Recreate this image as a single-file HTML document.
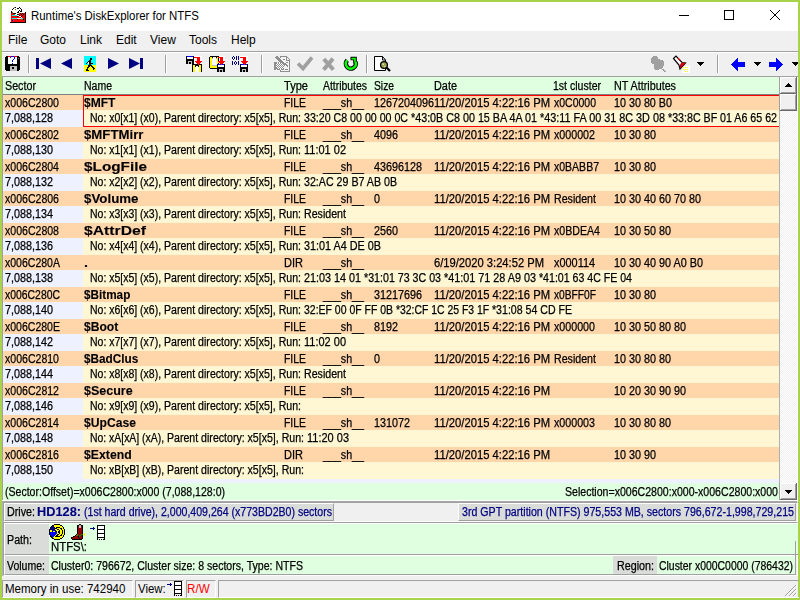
<!DOCTYPE html>
<html><head><meta charset="utf-8"><title>Runtime's DiskExplorer for NTFS</title>
<style>
html,body{margin:0;padding:0;}
body{width:800px;height:600px;overflow:hidden;background:#a8d34a;position:relative;font-family:"Liberation Sans",sans-serif;font-size:12px;color:#000;}
div,span,svg{position:absolute;}
#win{left:2px;top:2px;width:796px;height:596px;background:#f0f0f0;}
#title{left:2px;top:2px;width:796px;height:29px;background:#fff;}
.ui{font-size:12px;line-height:16px;white-space:pre;transform-origin:0 0;}
#tbtop{left:2px;top:51px;width:796px;height:1px;background:#a0a0a0;border-bottom:1px solid #fff;}
.sep{width:1px;height:18px;top:55px;background:#a0a0a0;border-right:1px solid #fff;}
#lframe{left:2px;top:76px;width:796px;height:424px;background:#fff;border-left:1px solid #a0a0a0;border-top:1px solid #a0a0a0;box-sizing:border-box;}
#hdr{left:3px;top:77px;width:776px;height:17px;background:#e0ffe0;border-bottom:1px solid #808080;}
#list{left:3px;top:95px;width:776px;height:388px;background:#eef1ff;}
.r{left:3px;width:776px;}
.r.o{background:#ffd5aa;height:15px;}
.r.c{background:linear-gradient(to right,#eef1ff 0,#eef1ff 80px,#fff7d3 80px);height:17px;}
.t{-webkit-text-stroke:0.25px;line-height:14px;margin-top:2px;margin-left:0.25px;white-space:pre;transform-origin:0 0;font-size:12px;}
.b{font-weight:bold;-webkit-text-stroke:0.1px;}
#selbox{left:83px;top:95px;width:700px;height:32px;border:1px solid #f00;box-sizing:border-box;}
#stl{left:3px;top:483px;width:776px;height:17px;background:#e0ffe0;}
#sb{left:779px;top:77px;width:18px;height:423px;background:repeating-conic-gradient(#fff 0 25%,#f0f0f0 0 50%) 0 0/2px 2px;border-left:1px solid #b0b0b0;box-sizing:border-box;}
.btn{background:#f0f0f0;box-shadow:inset 1px 0 0 #a0a0a0,inset -1px -1px 0 #696969,inset 2px 1px 0 #fff,inset -2px -2px 0 #a0a0a0;}
.sunk{box-sizing:border-box;border:1px solid;border-color:#a0a0a0 #fff #fff #a0a0a0;}
.rais{box-sizing:border-box;border:1px solid;border-color:#fff #a0a0a0 #a0a0a0 #fff;}
.g{background:#d9dcd9;}
.gr{background:#e0ffe0;}
.nv{color:#000080;}
</style></head><body>
<div id="win"></div>
<div id="title"></div>
<span class="ui" style="left:31px;top:8px;transform:scaleX(0.952)">Runtime's DiskExplorer for NTFS</span>
<!-- window controls -->
<svg style="left:670px;top:2px" width="128" height="29" viewBox="0 0 128 29" shape-rendering="crispEdges"><path d="M9 13.5h10" stroke="#000" fill="none"/><rect x="54.5" y="8.5" width="9" height="9" stroke="#000" fill="none"/><path d="M100 8l10 10M110 8l-10 10" stroke="#000" fill="none" shape-rendering="auto"/></svg>
<!-- menu -->
<span class="ui m" style="left:8px;top:32px">File</span><span class="ui m" style="left:40px;top:32px">Goto</span><span class="ui m" style="left:80px;top:32px">Link</span><span class="ui m" style="left:116px;top:32px">Edit</span><span class="ui m" style="left:150px;top:32px">View</span><span class="ui m" style="left:189px;top:32px">Tools</span><span class="ui m" style="left:231px;top:32px">Help</span>
<div id="tbtop"></div>
<div class="sep" style="left:28px"></div><div class="sep" style="left:165px"></div><div class="sep" style="left:261px"></div><div class="sep" style="left:366px"></div><div class="sep" style="left:717px"></div>
<div id="lframe"></div>
<div id="list"></div>
<div class="r o" style="top:95px"></div><div class="r c" style="top:110px"></div>
<div class="r o" style="top:127px"></div><div class="r c" style="top:142px"></div>
<div class="r o" style="top:159px"></div><div class="r c" style="top:174px"></div>
<div class="r o" style="top:191px"></div><div class="r c" style="top:206px"></div>
<div class="r o" style="top:223px"></div><div class="r c" style="top:238px"></div>
<div class="r o" style="top:255px"></div><div class="r c" style="top:270px"></div>
<div class="r o" style="top:287px"></div><div class="r c" style="top:302px"></div>
<div class="r o" style="top:319px"></div><div class="r c" style="top:334px"></div>
<div class="r o" style="top:351px"></div><div class="r c" style="top:366px"></div>
<div class="r o" style="top:383px"></div><div class="r c" style="top:398px"></div>
<div class="r o" style="top:415px"></div><div class="r c" style="top:430px"></div>
<div class="r o" style="top:447px"></div><div class="r c" style="top:462px"></div>
<div id="hdr"></div>
<div id="stl"></div>
<div id="selbox"></div>
<div id="sb"></div>
<div class="btn" style="left:779px;top:77px;width:18px;height:17px"></div>
<div class="btn" style="left:779px;top:94px;width:18px;height:17px"></div>
<div class="btn" style="left:779px;top:483px;width:18px;height:17px"></div>
<svg style="left:785px;top:83px" width="7" height="4" shape-rendering="crispEdges"><path d="M3 0h1v1h1v1h1v1h1v1h-7v-1h1v-1h1v-1h1z" fill="#000"/></svg>
<svg style="left:785px;top:490px" width="7" height="4" shape-rendering="crispEdges"><path d="M0 0h7v1h-1v1h-1v1h-1v1h-1v-1h-1v-1h-1v-1h-1z" fill="#000"/></svg>
<!-- lines under list -->
<div style="left:2px;top:500px;width:796px;height:1px;background:#fff"></div>
<div style="left:2px;top:501px;width:795px;height:1px;background:#a8a8a8"></div>
<div style="left:2px;top:502px;width:1px;height:74px;background:#b0b0bc"></div>
<!-- Drive container -->
<div class="sunk" style="left:3px;top:502px;width:795px;height:20px;background:#f0f0f0"></div>
<div class="rais g" style="left:4px;top:503px;width:330px;height:18px"></div>
<div class="rais g" style="left:458px;top:503px;width:338px;height:18px"></div>
<!-- Path / Volume container -->
<div class="sunk" style="left:3px;top:522px;width:795px;height:54px;background:#f0f0f0"></div>
<div class="rais gr" style="left:4px;top:523px;width:794px;height:32px;border-right:0"></div>
<div class="g" style="left:5px;top:524px;width:44px;height:30px"></div>
<div class="rais gr" style="left:4px;top:555px;width:792px;height:20px"></div>
<div class="g" style="left:5px;top:556px;width:44px;height:18px"></div>
<div class="g" style="left:613px;top:556px;width:44px;height:18px"></div>
<div style="left:795px;top:541px;width:1px;height:33px;background:#a0a0a0"></div>
<!-- status bar -->
<div class="sunk" style="left:2px;top:580px;width:131px;height:18px"></div>
<div class="sunk" style="left:135px;top:580px;width:49px;height:18px"></div>
<div class="sunk" style="left:186px;top:580px;width:30px;height:18px"></div>
<div class="sunk" style="left:218px;top:580px;width:581px;height:18px;border-right:0"></div>
<span class="ui" style="left:5px;top:581px;transform:scaleX(0.96)">Memory in use: 742940</span>
<span class="ui" style="left:138px;top:581px;transform:scaleX(0.95)">View:</span>
<span class="ui" style="left:187px;top:581px;color:#f00;transform:scaleX(0.97)">R/W</span>
<svg style="left:10px;top:7px" width="16" height="16" viewBox="0 0 16 16" shape-rendering="crispEdges"><path fill="#807000" d="M4 0h1v1h-1zM5 2h1v1h-1zM2 5h1v1h-1zM4 7h1v1h-1zM11 12h2v1h-2z"/><path fill="#000" d="M5 0h1v1h-1zM9 0h1v1h-1zM3 1h1v1h-1zM7 1h2v1h-2zM10 1h1v1h-1zM2 2h1v1h-1zM11 2h1v1h-1zM9 3h1v1h-1zM11 3h1v1h-1zM1 4h1v1h-1zM8 4h1v1h-1zM10 4h2v1h-2zM1 5h1v1h-1zM7 5h2v1h-2zM15 5h1v1h-1zM3 6h3v1h-3zM10 6h1v1h-1zM12 6h1v1h-1zM15 6h1v1h-1zM7 7h2v1h-2zM11 7h1v1h-1zM13 7h1v1h-1zM15 7h1v1h-1zM9 8h1v1h-1zM12 8h1v1h-1zM15 8h1v1h-1zM7 9h1v1h-1zM11 9h1v1h-1zM15 9h1v1h-1zM15 10h1v1h-1zM15 11h1v1h-1zM7 12h1v1h-1zM13 12h1v1h-1zM15 12h1v1h-1zM2 13h1v1h-1zM15 13h1v1h-1zM15 14h1v1h-1zM0 15h16v1h-16z"/><path fill="#fff" d="M4 1h3v1h-3zM9 1h1v1h-1zM3 2h2v1h-2zM6 2h5v1h-5zM3 3h6v1h-6zM10 3h1v1h-1zM3 4h5v1h-5zM9 4h1v1h-1zM3 5h4v1h-4zM9 5h1v1h-1zM6 6h3v1h-3zM5 7h2v1h-2zM7 8h2v1h-2zM9 9h2v1h-2zM11 10h1v1h-1zM7 11h4v1h-4z"/><path fill="#f00" d="M1 6h2v1h-2zM9 6h1v1h-1zM11 6h1v1h-1zM13 6h2v1h-2zM1 7h3v1h-3zM9 7h2v1h-2zM12 7h1v1h-1zM14 7h1v1h-1zM1 8h1v1h-1zM10 8h2v1h-2zM13 8h2v1h-2zM1 9h6v1h-6zM8 9h1v1h-1zM12 9h3v1h-3zM1 10h10v1h-10zM12 10h3v1h-3zM1 11h1v1h-1zM13 11h2v1h-2zM1 12h6v1h-6zM8 12h3v1h-3zM14 12h1v1h-1zM1 13h1v1h-1zM4 13h11v1h-11zM1 14h14v1h-14z"/><path fill="#0ff" d="M2 8h5v1h-5zM2 11h5v1h-5zM11 11h2v1h-2z"/><path fill="#f0f" d="M3 13h1v1h-1z"/></svg>
<svg style="left:5px;top:56px" width="15" height="15" viewBox="0 0 15 15" shape-rendering="crispEdges"><path fill="#000" d="M1 0h2v1h-2zM12 0h2v1h-2zM0 1h3v1h-3zM12 1h3v1h-3zM0 2h3v1h-3zM12 2h1v1h-1zM14 2h1v1h-1zM0 3h3v1h-3zM12 3h3v1h-3zM0 4h3v1h-3zM12 4h3v1h-3zM0 5h3v1h-3zM12 5h3v1h-3zM0 6h3v1h-3zM12 6h3v1h-3zM0 7h3v1h-3zM12 7h3v1h-3zM0 8h15v1h-15zM0 9h15v1h-15zM0 10h5v1h-5zM12 10h3v1h-3zM0 11h5v1h-5zM7 11h2v1h-2zM12 11h3v1h-3zM0 12h5v1h-5zM7 12h2v1h-2zM12 12h3v1h-3zM0 13h5v1h-5zM12 13h3v1h-3zM1 14h4v1h-4zM12 14h2v1h-2z"/><path fill="#f00" d="M3 0h3v1h-3zM9 0h3v1h-3z"/><path fill="#00f" d="M6 0h3v1h-3zM5 1h1v1h-1zM9 1h1v1h-1zM9 2h1v1h-1zM8 3h1v1h-1zM7 4h1v1h-1zM7 5h1v1h-1zM7 7h1v1h-1z"/><path fill="#fff" d="M3 1h2v1h-2zM6 1h3v1h-3zM10 1h2v1h-2zM3 2h6v1h-6zM10 2h2v1h-2zM3 3h5v1h-5zM9 3h3v1h-3zM3 4h4v1h-4zM8 4h4v1h-4zM3 5h4v1h-4zM8 5h4v1h-4zM3 6h9v1h-9zM3 7h4v1h-4zM8 7h4v1h-4z"/><path fill="#808080" d="M13 2h1v1h-1z"/><path fill="#c0c0c0" d="M5 10h7v1h-7zM5 11h2v1h-2zM9 11h3v1h-3zM5 12h2v1h-2zM9 12h3v1h-3zM5 13h7v1h-7zM5 14h7v1h-7z"/></svg>
<svg style="left:36px;top:58px" width="108" height="11" viewBox="0 0 108 11"><g fill="#000080"><rect x="0" y="0" width="3" height="11"/><path d="M15 0L15 11L4 5.5z"/><path d="M36 0L36 11L25 5.5z"/><path d="M72 0L72 11L83 5.5z"/><path d="M93 0L93 11L104 5.5z"/><rect x="104" y="0" width="3" height="11"/></g></svg>
<svg style="left:84px;top:56px" width="12" height="16" viewBox="0 0 12 16" shape-rendering="crispEdges"><path fill="#0ff" d="M0 0h12v1h-12zM0 1h12v1h-12zM0 2h6v1h-6zM8 2h4v1h-4zM0 3h6v1h-6zM8 3h4v1h-4zM0 4h5v1h-5zM7 4h5v1h-5zM0 5h4v1h-4zM7 5h5v1h-5zM0 6h3v1h-3zM7 6h5v1h-5zM0 7h2v1h-2zM3 7h1v1h-1zM9 7h3v1h-3zM0 8h5v1h-5zM7 8h5v1h-5z"/><path fill="#000" d="M6 2h2v1h-2zM6 3h2v1h-2zM5 4h2v1h-2zM4 5h3v1h-3zM3 6h1v1h-1zM5 6h2v1h-2zM2 7h1v1h-1zM5 7h4v1h-4zM5 8h2v1h-2zM4 9h4v1h-4zM4 10h2v1h-2zM7 10h2v1h-2zM3 11h2v1h-2zM8 11h2v1h-2zM3 12h1v1h-1zM9 12h2v1h-2zM2 13h2v1h-2zM9 13h1v1h-1zM2 14h3v1h-3z"/><path fill="#fff" d="M4 6h1v1h-1zM4 7h1v1h-1z"/><path fill="#ff0" d="M0 9h4v1h-4zM8 9h4v1h-4zM0 10h4v1h-4zM6 10h1v1h-1zM9 10h3v1h-3zM0 11h3v1h-3zM5 11h3v1h-3zM10 11h2v1h-2zM0 12h3v1h-3zM4 12h5v1h-5zM11 12h1v1h-1zM0 13h2v1h-2zM4 13h5v1h-5zM10 13h2v1h-2zM0 14h2v1h-2zM5 14h7v1h-7zM0 15h12v1h-12z"/></svg>
<svg style="left:186px;top:56px" width="16" height="16" viewBox="0 0 16 16" shape-rendering="crispEdges"><path fill="#000" d="M0 0h1v1h-1zM7 0h1v1h-1zM0 1h1v1h-1zM7 1h1v1h-1zM0 2h1v1h-1zM7 2h1v1h-1zM0 3h8v1h-8zM0 4h8v1h-8zM0 5h2v1h-2zM6 5h2v1h-2zM0 6h2v1h-2zM3 6h2v1h-2zM6 6h2v1h-2zM0 7h2v1h-2zM3 7h2v1h-2zM6 7h2v1h-2zM6 8h6v1h-6zM13 8h3v1h-3zM6 9h1v1h-1zM9 9h4v1h-4zM15 9h1v1h-1zM6 10h1v1h-1zM9 10h1v1h-1zM12 10h1v1h-1zM15 10h1v1h-1zM6 11h1v1h-1zM15 11h1v1h-1zM6 12h1v1h-1zM15 12h1v1h-1zM6 13h1v1h-1zM15 13h1v1h-1zM6 14h1v1h-1zM15 14h1v1h-1zM6 15h1v1h-1zM15 15h1v1h-1z"/><path fill="#00f" d="M1 0h6v1h-6z"/><path fill="#fff" d="M8 0h8v1h-8zM1 1h6v1h-6zM14 1h2v1h-2zM1 2h6v1h-6zM8 2h3v1h-3zM14 2h2v1h-2zM8 3h3v1h-3zM14 3h2v1h-2zM8 4h3v1h-3zM14 4h2v1h-2zM8 5h1v1h-1zM8 6h2v1h-2zM15 6h1v1h-1zM8 7h3v1h-3zM14 7h2v1h-2zM10 10h2v1h-2zM9 11h4v1h-4zM9 12h4v1h-4zM9 13h4v1h-4zM9 14h4v1h-4zM9 15h4v1h-4z"/><path fill="#f00" d="M8 1h6v1h-6zM11 2h3v1h-3zM11 3h3v1h-3zM11 4h3v1h-3zM9 5h7v1h-7zM10 6h5v1h-5zM11 7h3v1h-3zM12 8h1v1h-1z"/><path fill="#c0c0c0" d="M2 5h4v1h-4zM2 6h1v1h-1zM5 6h1v1h-1zM2 7h1v1h-1zM5 7h1v1h-1z"/><path fill="#ff0" d="M7 9h2v1h-2zM13 9h2v1h-2zM7 10h2v1h-2zM13 10h2v1h-2zM7 11h2v1h-2zM13 11h2v1h-2zM7 12h2v1h-2zM13 12h2v1h-2zM7 13h2v1h-2zM13 13h2v1h-2zM7 14h2v1h-2zM13 14h2v1h-2zM7 15h2v1h-2zM13 15h2v1h-2z"/></svg>
<svg style="left:209px;top:56px" width="16" height="16" viewBox="0 0 16 16" shape-rendering="crispEdges"><path fill="#000" d="M1 0h9v1h-9zM0 1h1v1h-1zM3 1h1v1h-1zM7 1h1v1h-1zM0 2h1v1h-1zM9 2h1v1h-1zM0 3h1v1h-1zM9 3h1v1h-1zM0 4h1v1h-1zM9 4h1v1h-1zM0 5h1v1h-1zM0 6h1v1h-1zM0 7h1v1h-1zM9 7h1v1h-1zM0 8h1v1h-1zM8 8h1v1h-1zM15 8h1v1h-1zM0 9h1v1h-1zM8 9h1v1h-1zM15 9h1v1h-1zM0 10h1v1h-1zM8 10h1v1h-1zM15 10h1v1h-1zM0 11h1v1h-1zM8 11h8v1h-8zM1 12h15v1h-15zM8 13h2v1h-2zM14 13h2v1h-2zM8 14h2v1h-2zM11 14h2v1h-2zM14 14h2v1h-2zM8 15h2v1h-2zM11 15h2v1h-2zM14 15h2v1h-2z"/><path fill="#fff" d="M10 0h6v1h-6zM4 1h3v1h-3zM14 1h2v1h-2zM4 2h3v1h-3zM10 2h1v1h-1zM14 2h2v1h-2zM3 3h5v1h-5zM10 3h1v1h-1zM14 3h2v1h-2zM3 4h5v1h-5zM10 4h1v1h-1zM14 4h2v1h-2zM3 5h5v1h-5zM3 6h5v1h-5zM15 6h1v1h-1zM3 7h5v1h-5zM10 7h1v1h-1zM14 7h2v1h-2zM3 8h5v1h-5zM9 9h6v1h-6zM9 10h6v1h-6z"/><path fill="#ff0" d="M1 1h2v1h-2zM8 1h1v1h-1zM1 2h2v1h-2zM8 2h1v1h-1zM1 3h2v1h-2zM8 3h1v1h-1zM1 4h2v1h-2zM8 4h1v1h-1zM1 5h2v1h-2zM8 5h1v1h-1zM1 6h2v1h-2zM8 6h2v1h-2zM1 7h2v1h-2zM8 7h1v1h-1zM1 8h2v1h-2zM1 9h2v1h-2zM1 10h7v1h-7zM1 11h7v1h-7z"/><path fill="#f00" d="M9 1h5v1h-5zM11 2h3v1h-3zM11 3h3v1h-3zM11 4h3v1h-3zM9 5h7v1h-7zM10 6h5v1h-5zM11 7h3v1h-3zM12 8h1v1h-1z"/><path fill="#c0c0c0" d="M3 2h1v1h-1zM7 2h1v1h-1zM3 9h5v1h-5zM10 13h4v1h-4zM10 14h1v1h-1zM13 14h1v1h-1zM10 15h1v1h-1zM13 15h1v1h-1z"/><path fill="#00f" d="M9 8h3v1h-3zM13 8h2v1h-2z"/></svg>
<svg style="left:232px;top:56px" width="16" height="16" viewBox="0 0 16 16" shape-rendering="crispEdges"><path fill="#000080" d="M1 0h1v1h-1zM4 0h1v1h-1zM6 0h1v1h-1zM0 1h1v1h-1zM2 1h1v1h-1zM4 1h1v1h-1zM6 1h1v1h-1zM0 2h1v1h-1zM2 2h1v1h-1zM4 2h1v1h-1zM6 2h1v1h-1zM1 3h1v1h-1zM4 3h1v1h-1zM6 3h1v1h-1zM0 5h1v1h-1zM3 5h1v1h-1zM6 5h1v1h-1zM0 6h1v1h-1zM2 6h1v1h-1zM4 6h1v1h-1zM6 6h1v1h-1zM0 7h1v1h-1zM2 7h1v1h-1zM4 7h1v1h-1zM6 7h1v1h-1zM0 8h1v1h-1zM3 8h1v1h-1zM6 8h1v1h-1z"/><path fill="#fff" d="M8 0h8v1h-8zM14 1h2v1h-2zM8 2h3v1h-3zM14 2h2v1h-2zM8 3h3v1h-3zM14 3h2v1h-2zM8 4h3v1h-3zM14 4h2v1h-2zM8 5h1v1h-1zM8 6h2v1h-2zM15 6h1v1h-1zM8 7h3v1h-3zM14 7h2v1h-2zM9 9h6v1h-6zM9 10h6v1h-6z"/><path fill="#f00" d="M8 1h6v1h-6zM11 2h3v1h-3zM11 3h3v1h-3zM11 4h3v1h-3zM9 5h7v1h-7zM10 6h5v1h-5zM11 7h3v1h-3zM12 8h1v1h-1z"/><path fill="#000" d="M8 8h1v1h-1zM15 8h1v1h-1zM8 9h1v1h-1zM15 9h1v1h-1zM8 10h1v1h-1zM15 10h1v1h-1zM8 11h8v1h-8zM8 12h8v1h-8zM8 13h2v1h-2zM14 13h2v1h-2zM8 14h2v1h-2zM11 14h2v1h-2zM14 14h2v1h-2zM8 15h2v1h-2zM11 15h2v1h-2zM14 15h2v1h-2z"/><path fill="#00f" d="M9 8h3v1h-3zM13 8h2v1h-2z"/><path fill="#c0c0c0" d="M10 13h4v1h-4zM10 14h1v1h-1zM13 14h1v1h-1zM10 15h1v1h-1zM13 15h1v1h-1z"/></svg>
<svg style="left:274px;top:56px" width="16" height="16" viewBox="0 0 16 16" shape-rendering="crispEdges"><path fill="#8e8e8e" d="M2 0h2v1h-2zM6 0h7v1h-7zM1 1h4v1h-4zM6 1h1v1h-1zM12 1h2v1h-2zM2 2h4v1h-4zM12 2h1v1h-1zM14 2h1v1h-1zM3 3h4v1h-4zM9 3h2v1h-2zM12 3h1v1h-1zM15 3h1v1h-1zM4 4h4v1h-4zM12 4h4v1h-4zM5 5h4v1h-4zM15 5h1v1h-1zM0 6h3v1h-3zM4 6h1v1h-1zM6 6h4v1h-4zM12 6h2v1h-2zM15 6h1v1h-1zM0 7h3v1h-3zM4 7h1v1h-1zM6 7h1v1h-1zM8 7h4v1h-4zM15 7h1v1h-1zM0 8h2v1h-2zM3 8h1v1h-1zM5 8h1v1h-1zM7 8h1v1h-1zM9 8h4v1h-4zM15 8h1v1h-1zM0 9h3v1h-3zM4 9h1v1h-1zM6 9h1v1h-1zM8 9h1v1h-1zM10 9h1v1h-1zM12 9h2v1h-2zM15 9h1v1h-1zM0 10h2v1h-2zM3 10h1v1h-1zM5 10h1v1h-1zM7 10h1v1h-1zM9 10h1v1h-1zM13 10h1v1h-1zM15 10h1v1h-1zM0 11h3v1h-3zM4 11h1v1h-1zM6 11h1v1h-1zM8 11h1v1h-1zM15 11h1v1h-1zM0 12h4v1h-4zM5 12h1v1h-1zM7 12h1v1h-1zM9 12h1v1h-1zM15 12h1v1h-1zM0 13h2v1h-2zM3 13h3v1h-3zM7 13h3v1h-3zM11 13h3v1h-3zM15 13h1v1h-1zM6 14h1v1h-1zM15 14h1v1h-1zM6 15h10v1h-10z"/><path fill="#f4f4f4" d="M7 1h5v1h-5zM6 2h6v1h-6zM13 2h1v1h-1zM7 3h2v1h-2zM11 3h1v1h-1zM13 3h2v1h-2zM8 4h4v1h-4zM9 5h6v1h-6zM10 6h2v1h-2zM14 6h1v1h-1zM12 7h3v1h-3zM13 8h2v1h-2zM11 9h1v1h-1zM14 9h1v1h-1zM10 10h3v1h-3zM14 10h1v1h-1zM10 11h5v1h-5zM10 12h5v1h-5zM10 13h1v1h-1zM14 13h1v1h-1zM7 14h8v1h-8z"/><path fill="#fff" d="M5 6h1v1h-1zM3 7h1v1h-1zM5 7h1v1h-1zM7 7h1v1h-1zM2 8h1v1h-1zM4 8h1v1h-1zM6 8h1v1h-1zM8 8h1v1h-1zM3 9h1v1h-1zM5 9h1v1h-1zM7 9h1v1h-1zM9 9h1v1h-1zM2 10h1v1h-1zM4 10h1v1h-1zM6 10h1v1h-1zM8 10h1v1h-1zM3 11h1v1h-1zM5 11h1v1h-1zM7 11h1v1h-1zM9 11h1v1h-1zM4 12h1v1h-1zM6 12h1v1h-1zM8 12h1v1h-1zM6 13h1v1h-1z"/></svg>
<svg style="left:296px;top:56px" width="18" height="16" viewBox="0 0 18 16"><path d="M2 7.5l5 5L16 1.5" fill="none" stroke="#a0a0a0" stroke-width="3.6"/></svg>
<svg style="left:321px;top:56px" width="15" height="16" viewBox="0 0 15 16"><path d="M2.8 3l9.6 10.6M12 2.6L2.6 13.8" fill="none" stroke="#a0a0a0" stroke-width="4"/></svg>
<svg style="left:343px;top:56px" width="16" height="16" viewBox="0 0 16 16"><path d="M4.2 4.2A5 5 0 1 0 12.6 6" fill="none" stroke="#000" stroke-width="4.4"/><path d="M7.5 .8h6.3v6.4h-3.6v-3h-2.7z" fill="#000"/><path d="M4.2 4.2A5 5 0 1 0 12.6 6" fill="none" stroke="#0f0" stroke-width="2.4"/><path d="M8.5 1.8h4.3v4.6h-1.6v-3h-2.7z" fill="#0f0"/></svg>
<svg style="left:374px;top:56px" width="18" height="16" viewBox="0 0 18 16"><path d="M.5 .5h8l3 3.5v10.5h-11z" fill="#fff" stroke="#000"/><path d="M8.5 .5v3.5h3" fill="none" stroke="#000"/><circle cx="10" cy="9" r="3.4" fill="#a0a050" stroke="#000" stroke-width="1.3"/><path d="M8.6 7.6l1 1M10.6 10.4l.6 .6" stroke="#fff" stroke-width="1.2"/><path d="M12.5 11.5l3.5 3.5" stroke="#000" stroke-width="2.2"/></svg>
<svg style="left:651px;top:56px" width="16" height="16" viewBox="0 0 16 16" shape-rendering="crispEdges"><path fill="#a0a0a0" d="M2 0h4v1h-4zM1 1h6v1h-6zM0 2h7v1h-7zM0 3h9v1h-9zM0 4h12v1h-12zM0 5h13v1h-13zM0 6h13v1h-13zM1 7h12v1h-12zM3 8h10v1h-10zM3 9h10v1h-10zM3 10h9v1h-9zM3 11h9v1h-9zM3 12h8v1h-8zM4 13h4v1h-4zM11 13h2v1h-2zM12 14h2v1h-2zM13 15h2v1h-2z"/></svg>
<svg style="left:672px;top:55px" width="18" height="18" viewBox="0 0 18 18"><rect x="10" y="11" width="8" height="7" fill="#fff"/><path d="M11.5 12.5h0M13.5 12.5h0M15.5 12.5h0M11.5 14.5h0M13.5 14.5h0M15.5 14.5h0M13.5 16.5h0M15.5 16.5h0" stroke="#ff0" stroke-width="1.2" stroke-linecap="square"/><path d="M1.5 3.5l2.5-2.5 6 6.5 3.5 .5-5.5 6-1-4z" fill="#fff" stroke="#000" stroke-width="1.2"/><path d="M9.5 7.5l4 .5-5.2 5.6-.6-3z" fill="#d00"/><path d="M7.6 10.6l1.4-1.2 .3 3z" fill="#800040"/><path d="M6 3l2 2.5" stroke="#f00" stroke-width="1.2"/></svg>
<svg style="left:697px;top:62px" width="7" height="4" viewBox="0 0 7 4" shape-rendering="crispEdges"><path fill="#000" d="M0 0h7v1h-7zM1 1h5v1h-5zM2 2h3v1h-3zM3 3h1v1h-1z"/></svg>
<svg style="left:754px;top:62px" width="7" height="4" viewBox="0 0 7 4" shape-rendering="crispEdges"><path fill="#000" d="M0 0h7v1h-7zM1 1h5v1h-5zM2 2h3v1h-3zM3 3h1v1h-1z"/></svg>
<svg style="left:792px;top:62px" width="6" height="4" viewBox="0 0 6 4" shape-rendering="crispEdges"><path fill="#000" d="M0 0h6v1h-6zM1 1h5v1h-5zM2 2h3v1h-3zM3 3h1v1h-1z"/></svg>
<svg style="left:731px;top:58px" width="14" height="13" viewBox="0 0 14 13" shape-rendering="crispEdges"><path d="M0 6.5L7 0v4h7v5h-7v4z" fill="#00f"/></svg>
<svg style="left:769px;top:58px" width="14" height="13" viewBox="0 0 14 13" shape-rendering="crispEdges"><path d="M14 6.5L7 0v4h-7v5h7v4z" fill="#00f"/></svg>
<svg style="left:49px;top:524px" width="16" height="16" viewBox="0 0 16 16" shape-rendering="crispEdges"><path fill="#000" d="M5 0h6v1h-6zM3 1h2v1h-2zM11 1h2v1h-2zM2 2h1v1h-1zM13 2h1v1h-1zM1 3h1v1h-1zM7 3h4v1h-4zM14 3h1v1h-1zM1 4h1v1h-1zM6 4h2v1h-2zM11 4h2v1h-2zM14 4h1v1h-1zM0 5h1v1h-1zM8 5h2v1h-2zM12 5h1v1h-1zM15 5h1v1h-1zM0 6h1v1h-1zM10 6h1v1h-1zM13 6h1v1h-1zM15 6h1v1h-1zM0 7h1v1h-1zM9 7h2v1h-2zM13 7h1v1h-1zM15 7h1v1h-1zM0 8h1v1h-1zM9 8h2v1h-2zM13 8h1v1h-1zM15 8h1v1h-1zM0 9h1v1h-1zM10 9h1v1h-1zM13 9h1v1h-1zM15 9h1v1h-1zM0 10h1v1h-1zM8 10h2v1h-2zM12 10h1v1h-1zM15 10h1v1h-1zM1 11h1v1h-1zM7 11h2v1h-2zM11 11h2v1h-2zM14 11h1v1h-1zM1 12h2v1h-2zM6 12h5v1h-5zM14 12h1v1h-1zM2 13h2v1h-2zM13 13h1v1h-1zM3 14h2v1h-2zM11 14h2v1h-2zM5 15h6v1h-6z"/><path fill="#ff0" d="M5 1h6v1h-6zM5 2h8v1h-8zM6 3h1v1h-1zM11 3h3v1h-3zM8 4h3v1h-3zM13 4h1v1h-1zM6 5h2v1h-2zM10 5h2v1h-2zM13 5h2v1h-2zM1 6h2v1h-2zM7 6h3v1h-3zM11 6h2v1h-2zM14 6h1v1h-1zM1 7h2v1h-2zM4 7h2v1h-2zM8 7h1v1h-1zM11 7h2v1h-2zM14 7h1v1h-1zM8 8h1v1h-1zM11 8h2v1h-2zM14 8h1v1h-1zM8 9h2v1h-2zM11 9h2v1h-2zM14 9h1v1h-1zM7 10h1v1h-1zM10 10h2v1h-2zM13 10h2v1h-2zM6 11h1v1h-1zM9 11h2v1h-2zM13 11h1v1h-1zM5 12h1v1h-1zM11 12h3v1h-3zM4 13h9v1h-9zM5 14h6v1h-6z"/><path fill="#000080" d="M3 2h2v1h-2zM2 3h4v1h-4zM2 4h4v1h-4zM1 5h5v1h-5zM3 6h4v1h-4zM3 7h1v1h-1zM6 7h2v1h-2z"/><path fill="#00f" d="M1 8h7v1h-7zM1 9h7v1h-7zM1 10h6v1h-6zM2 11h4v1h-4zM3 12h2v1h-2z"/></svg>
<svg style="left:70px;top:524px" width="16" height="16" viewBox="0 0 16 16" shape-rendering="crispEdges"><path fill="#000" d="M9 0h2v1h-2zM7 1h2v1h-2zM11 1h2v1h-2zM7 2h1v1h-1zM12 2h1v1h-1zM7 3h1v1h-1zM12 3h1v1h-1zM7 4h1v1h-1zM12 4h1v1h-1zM7 5h1v1h-1zM12 5h1v1h-1zM7 6h1v1h-1zM12 6h1v1h-1zM7 7h1v1h-1zM12 7h1v1h-1zM7 8h1v1h-1zM12 8h1v1h-1zM7 9h1v1h-1zM12 9h1v1h-1zM6 10h1v1h-1zM5 11h1v1h-1zM12 11h1v1h-1zM3 12h2v1h-2zM8 12h1v1h-1zM12 12h1v1h-1zM1 13h2v1h-2zM8 13h1v1h-1zM12 13h1v1h-1zM1 14h1v1h-1zM9 14h1v1h-1zM12 14h1v1h-1zM2 15h10v1h-10z"/><path fill="#c0c0c0" d="M9 1h2v1h-2zM9 2h2v1h-2zM9 3h2v1h-2z"/><path fill="#900000" d="M8 2h1v1h-1zM11 2h1v1h-1zM8 3h1v1h-1zM11 3h1v1h-1zM8 4h4v1h-4zM8 5h4v1h-4zM8 6h4v1h-4zM8 7h4v1h-4zM8 8h4v1h-4zM8 9h4v1h-4zM8 10h3v1h-3zM8 11h1v1h-1zM11 11h1v1h-1zM5 12h3v1h-3zM10 12h2v1h-2zM3 13h5v1h-5zM9 13h3v1h-3zM2 14h7v1h-7zM10 14h2v1h-2z"/><path fill="#ff0" d="M14 9h1v1h-1zM13 10h2v1h-2zM14 11h1v1h-1z"/><path fill="#807000" d="M7 10h1v1h-1zM6 11h2v1h-2z"/><path fill="#008000" d="M11 10h2v1h-2zM9 11h2v1h-2zM9 12h1v1h-1z"/></svg>
<svg style="left:90px;top:525px" width="15" height="15" viewBox="0 0 15 15" shape-rendering="crispEdges"><path fill="#000" d="M7 0h8v1h-8zM7 1h1v1h-1zM14 1h1v1h-1zM7 2h1v1h-1zM14 2h1v1h-1zM7 3h1v1h-1zM14 3h1v1h-1zM7 4h8v1h-8zM7 5h1v1h-1zM14 5h1v1h-1zM7 6h1v1h-1zM14 6h1v1h-1zM7 7h1v1h-1zM14 7h1v1h-1zM7 8h8v1h-8zM7 9h1v1h-1zM14 9h1v1h-1zM7 10h1v1h-1zM14 10h1v1h-1zM7 11h1v1h-1zM14 11h1v1h-1zM7 12h8v1h-8zM7 13h1v1h-1zM14 13h1v1h-1zM7 14h1v1h-1zM9 14h1v1h-1zM11 14h1v1h-1zM13 14h2v1h-2z"/><path fill="#fff" d="M8 1h6v1h-6zM8 2h6v1h-6zM8 3h6v1h-6zM8 5h6v1h-6zM8 6h6v1h-6zM8 7h6v1h-6zM8 9h6v1h-6zM8 10h6v1h-6zM8 11h6v1h-6z"/><path fill="#000080" d="M3 2h1v1h-1zM0 3h5v1h-5zM3 4h1v1h-1z"/></svg>
<svg style="left:167px;top:581px" width="15" height="15" viewBox="0 0 15 15" shape-rendering="crispEdges"><path fill="#000" d="M7 0h8v1h-8zM7 1h1v1h-1zM14 1h1v1h-1zM7 2h1v1h-1zM14 2h1v1h-1zM7 3h1v1h-1zM14 3h1v1h-1zM7 4h8v1h-8zM7 5h1v1h-1zM14 5h1v1h-1zM7 6h1v1h-1zM14 6h1v1h-1zM7 7h1v1h-1zM14 7h1v1h-1zM7 8h8v1h-8zM7 9h1v1h-1zM14 9h1v1h-1zM7 10h1v1h-1zM14 10h1v1h-1zM7 11h1v1h-1zM14 11h1v1h-1zM7 12h8v1h-8zM7 13h1v1h-1zM14 13h1v1h-1zM7 14h1v1h-1zM9 14h1v1h-1zM11 14h1v1h-1zM13 14h2v1h-2z"/><path fill="#fff" d="M8 1h6v1h-6zM8 2h6v1h-6zM8 3h6v1h-6zM8 5h6v1h-6zM8 6h6v1h-6zM8 7h6v1h-6zM8 9h6v1h-6zM8 10h6v1h-6zM8 11h6v1h-6z"/><path fill="#000080" d="M3 2h1v1h-1zM0 3h5v1h-5zM3 4h1v1h-1z"/></svg>
<svg style="left:784px;top:584px" width="13" height="13" viewBox="0 0 13 13"><path d="M12 1L1 12M12 5L5 12M12 9L9 12" stroke="#a0a0a0" stroke-width="1"/><path d="M13 1L2 12M13 5L6 12M13 9L10 12" stroke="#fff" stroke-width="1"/></svg>
<div id="txt" style="left:0;top:0;width:800px;height:600px;will-change:transform">
<span class="t" style="left:5px;top:94px;transform:scaleX(0.8796)">x006C2800</span>
<span class="t" style="left:5px;top:109px;transform:scaleX(0.8990)">7,088,128</span>
<span class="t b" style="left:84px;top:94px;transform:scaleX(1.0050)">$MFT</span>
<span class="t" style="left:284px;top:94px;transform:scaleX(0.8681)">FILE</span>
<span class="t" style="left:323px;top:94px;transform:scaleX(0.8904)">___sh__</span>
<span class="t" style="left:374px;top:94px;transform:scaleX(0.8989)">1267204096</span>
<span class="t" style="left:434px;top:94px;transform:scaleX(0.9364)">11/20/2015 4:22:16 PM</span>
<span class="t" style="left:554px;top:94px;transform:scaleX(0.8741)">x0C0000</span>
<span class="t" style="left:614px;top:94px;transform:scaleX(0.8960)">10 30 80 B0</span>
<span class="t" style="left:90px;top:109px;transform:scaleX(0.8736)">No: x0[x1] (x0), </span>
<span class="t" style="left:164px;top:109px;transform:scaleX(0.8819)">Parent directory: x5[x5], Run: </span>
<span class="t" style="left:304px;top:109px;transform:scaleX(0.8860)">33:20 C8 00 00 00 0C </span>
<span class="t" style="left:411px;top:109px;transform:scaleX(0.8951)">*43:0B C8 00 15 BA 4A 01 </span>
<span class="t" style="left:540px;top:109px;transform:scaleX(0.9021)">*43:11 FA 00 31 8C 3D 08 </span>
<span class="t" style="left:668px;top:109px;transform:scaleX(0.8879)">*33:8C BF 01 A6 65 62</span>
<span class="t" style="left:5px;top:126px;transform:scaleX(0.8796)">x006C2802</span>
<span class="t" style="left:5px;top:141px;transform:scaleX(0.8990)">7,088,130</span>
<span class="t b" style="left:84px;top:126px;transform:scaleX(1.1019)">$MFTMirr</span>
<span class="t" style="left:284px;top:126px;transform:scaleX(0.8681)">FILE</span>
<span class="t" style="left:323px;top:126px;transform:scaleX(0.8904)">___sh__</span>
<span class="t" style="left:374px;top:126px;transform:scaleX(0.8988)">4096</span>
<span class="t" style="left:434px;top:126px;transform:scaleX(0.9364)">11/20/2015 4:22:16 PM</span>
<span class="t" style="left:554px;top:126px;transform:scaleX(0.8904)">x000002</span>
<span class="t" style="left:614px;top:126px;transform:scaleX(0.8990)">10 30 80</span>
<span class="t" style="left:90px;top:141px;transform:scaleX(0.8736)">No: x1[x1] (x1), </span>
<span class="t" style="left:164px;top:141px;transform:scaleX(0.8819)">Parent directory: x5[x5], Run: </span>
<span class="t" style="left:304px;top:141px;transform:scaleX(0.9165)">11:01 02</span>
<span class="t" style="left:5px;top:158px;transform:scaleX(0.8796)">x006C2804</span>
<span class="t" style="left:5px;top:173px;transform:scaleX(0.8990)">7,088,132</span>
<span class="t b" style="left:84px;top:158px;transform:scaleX(1.2768)">$LogFile</span>
<span class="t" style="left:284px;top:158px;transform:scaleX(0.8681)">FILE</span>
<span class="t" style="left:323px;top:158px;transform:scaleX(0.8904)">___sh__</span>
<span class="t" style="left:374px;top:158px;transform:scaleX(0.8990)">43696128</span>
<span class="t" style="left:434px;top:158px;transform:scaleX(0.9364)">11/20/2015 4:22:16 PM</span>
<span class="t" style="left:554px;top:158px;transform:scaleX(0.8759)">x0BABB7</span>
<span class="t" style="left:614px;top:158px;transform:scaleX(0.8990)">10 30 80</span>
<span class="t" style="left:90px;top:173px;transform:scaleX(0.8736)">No: x2[x2] (x2), </span>
<span class="t" style="left:164px;top:173px;transform:scaleX(0.8819)">Parent directory: x5[x5], Run: </span>
<span class="t" style="left:304px;top:173px;transform:scaleX(0.8878)">32:AC 29 B7 AB 0B</span>
<span class="t" style="left:5px;top:190px;transform:scaleX(0.8796)">x006C2806</span>
<span class="t" style="left:5px;top:205px;transform:scaleX(0.8990)">7,088,134</span>
<span class="t b" style="left:84px;top:190px;transform:scaleX(1.1094)">$Volume</span>
<span class="t" style="left:284px;top:190px;transform:scaleX(0.8681)">FILE</span>
<span class="t" style="left:323px;top:190px;transform:scaleX(0.8904)">___sh__</span>
<span class="t" style="left:374px;top:190px;transform:scaleX(0.8972)">0</span>
<span class="t" style="left:434px;top:190px;transform:scaleX(0.9364)">11/20/2015 4:22:16 PM</span>
<span class="t" style="left:554px;top:190px;transform:scaleX(0.8865)">Resident</span>
<span class="t" style="left:614px;top:190px;transform:scaleX(0.8991)">10 30 40 60 70 80</span>
<span class="t" style="left:90px;top:205px;transform:scaleX(0.8736)">No: x3[x3] (x3), </span>
<span class="t" style="left:164px;top:205px;transform:scaleX(0.8819)">Parent directory: x5[x5], Run: </span>
<span class="t" style="left:304px;top:205px;transform:scaleX(0.8865)">Resident</span>
<span class="t" style="left:5px;top:222px;transform:scaleX(0.8796)">x006C2808</span>
<span class="t" style="left:5px;top:237px;transform:scaleX(0.8990)">7,088,136</span>
<span class="t b" style="left:84px;top:222px;transform:scaleX(1.3096)">$AttrDef</span>
<span class="t" style="left:284px;top:222px;transform:scaleX(0.8681)">FILE</span>
<span class="t" style="left:323px;top:222px;transform:scaleX(0.8904)">___sh__</span>
<span class="t" style="left:374px;top:222px;transform:scaleX(0.8988)">2560</span>
<span class="t" style="left:434px;top:222px;transform:scaleX(0.9364)">11/20/2015 4:22:16 PM</span>
<span class="t" style="left:554px;top:222px;transform:scaleX(0.8841)">x0BDEA4</span>
<span class="t" style="left:614px;top:222px;transform:scaleX(0.8990)">10 30 50 80</span>
<span class="t" style="left:90px;top:237px;transform:scaleX(0.8736)">No: x4[x4] (x4), </span>
<span class="t" style="left:164px;top:237px;transform:scaleX(0.8819)">Parent directory: x5[x5], Run: </span>
<span class="t" style="left:304px;top:237px;transform:scaleX(0.9016)">31:01 A4 DE 0B</span>
<span class="t" style="left:5px;top:254px;transform:scaleX(0.8769)">x006C280A</span>
<span class="t" style="left:5px;top:269px;transform:scaleX(0.8990)">7,088,138</span>
<span class="t b" style="left:84px;top:254px;transform:scaleX(1.1963)">.</span>
<span class="t" style="left:284px;top:254px;transform:scaleX(0.9191)">DIR</span>
<span class="t" style="left:323px;top:254px;transform:scaleX(0.8904)">___sh__</span>
<span class="t" style="left:434px;top:254px;transform:scaleX(0.9315)">6/19/2020 3:24:52 PM</span>
<span class="t" style="left:554px;top:254px;transform:scaleX(0.9080)">x000114</span>
<span class="t" style="left:614px;top:254px;transform:scaleX(0.9011)">10 30 40 90 A0 B0</span>
<span class="t" style="left:90px;top:269px;transform:scaleX(0.8736)">No: x5[x5] (x5), </span>
<span class="t" style="left:164px;top:269px;transform:scaleX(0.8819)">Parent directory: x5[x5], Run: </span>
<span class="t" style="left:304px;top:269px;transform:scaleX(0.8991)">21:03 14 01 </span>
<span class="t" style="left:364px;top:269px;transform:scaleX(0.8881)">*31:01 73 3C 03 </span>
<span class="t" style="left:444px;top:269px;transform:scaleX(0.9010)">*41:01 71 28 A9 03 </span>
<span class="t" style="left:539px;top:269px;transform:scaleX(0.8823)">*41:01 63 4C FE 04</span>
<span class="t" style="left:5px;top:286px;transform:scaleX(0.8679)">x006C280C</span>
<span class="t" style="left:5px;top:301px;transform:scaleX(0.8990)">7,088,140</span>
<span class="t b" style="left:84px;top:286px;transform:scaleX(0.9780)">$Bitmap</span>
<span class="t" style="left:284px;top:286px;transform:scaleX(0.8681)">FILE</span>
<span class="t" style="left:323px;top:286px;transform:scaleX(0.8904)">___sh__</span>
<span class="t" style="left:374px;top:286px;transform:scaleX(0.8990)">31217696</span>
<span class="t" style="left:434px;top:286px;transform:scaleX(0.9364)">11/20/2015 4:22:16 PM</span>
<span class="t" style="left:554px;top:286px;transform:scaleX(0.8512)">x0BFF0F</span>
<span class="t" style="left:614px;top:286px;transform:scaleX(0.8990)">10 30 80</span>
<span class="t" style="left:90px;top:301px;transform:scaleX(0.8736)">No: x6[x6] (x6), </span>
<span class="t" style="left:164px;top:301px;transform:scaleX(0.8819)">Parent directory: x5[x5], Run: </span>
<span class="t" style="left:304px;top:301px;transform:scaleX(0.8731)">32:EF 00 0F FF 0B </span>
<span class="t" style="left:396px;top:301px;transform:scaleX(0.8671)">*32:CF 1C 25 F3 1F </span>
<span class="t" style="left:492px;top:301px;transform:scaleX(0.8818)">*31:08 54 CD FE</span>
<span class="t" style="left:5px;top:318px;transform:scaleX(0.8769)">x006C280E</span>
<span class="t" style="left:5px;top:333px;transform:scaleX(0.8990)">7,088,142</span>
<span class="t b" style="left:84px;top:318px;transform:scaleX(1.0088)">$Boot</span>
<span class="t" style="left:284px;top:318px;transform:scaleX(0.8681)">FILE</span>
<span class="t" style="left:323px;top:318px;transform:scaleX(0.8904)">___sh__</span>
<span class="t" style="left:374px;top:318px;transform:scaleX(0.8988)">8192</span>
<span class="t" style="left:434px;top:318px;transform:scaleX(0.9364)">11/20/2015 4:22:16 PM</span>
<span class="t" style="left:554px;top:318px;transform:scaleX(0.8904)">x000000</span>
<span class="t" style="left:614px;top:318px;transform:scaleX(0.8991)">10 30 50 80 80</span>
<span class="t" style="left:90px;top:333px;transform:scaleX(0.8736)">No: x7[x7] (x7), </span>
<span class="t" style="left:164px;top:333px;transform:scaleX(0.8819)">Parent directory: x5[x5], Run: </span>
<span class="t" style="left:304px;top:333px;transform:scaleX(0.9165)">11:02 00</span>
<span class="t" style="left:5px;top:350px;transform:scaleX(0.8796)">x006C2810</span>
<span class="t" style="left:5px;top:365px;transform:scaleX(0.8990)">7,088,144</span>
<span class="t b" style="left:84px;top:350px;transform:scaleX(0.9809)">$BadClus</span>
<span class="t" style="left:284px;top:350px;transform:scaleX(0.8681)">FILE</span>
<span class="t" style="left:323px;top:350px;transform:scaleX(0.8904)">___sh__</span>
<span class="t" style="left:374px;top:350px;transform:scaleX(0.8972)">0</span>
<span class="t" style="left:434px;top:350px;transform:scaleX(0.9364)">11/20/2015 4:22:16 PM</span>
<span class="t" style="left:554px;top:350px;transform:scaleX(0.8865)">Resident</span>
<span class="t" style="left:614px;top:350px;transform:scaleX(0.8990)">10 30 80 80</span>
<span class="t" style="left:90px;top:365px;transform:scaleX(0.8736)">No: x8[x8] (x8), </span>
<span class="t" style="left:164px;top:365px;transform:scaleX(0.8819)">Parent directory: x5[x5], Run: </span>
<span class="t" style="left:304px;top:365px;transform:scaleX(0.8865)">Resident</span>
<span class="t" style="left:5px;top:382px;transform:scaleX(0.8796)">x006C2812</span>
<span class="t" style="left:5px;top:397px;transform:scaleX(0.8990)">7,088,146</span>
<span class="t b" style="left:84px;top:382px;transform:scaleX(1.0428)">$Secure</span>
<span class="t" style="left:284px;top:382px;transform:scaleX(0.8681)">FILE</span>
<span class="t" style="left:323px;top:382px;transform:scaleX(0.8904)">___sh__</span>
<span class="t" style="left:434px;top:382px;transform:scaleX(0.9364)">11/20/2015 4:22:16 PM</span>
<span class="t" style="left:614px;top:382px;transform:scaleX(0.8991)">10 20 30 90 90</span>
<span class="t" style="left:90px;top:397px;transform:scaleX(0.8736)">No: x9[x9] (x9), </span>
<span class="t" style="left:164px;top:397px;transform:scaleX(0.8819)">Parent directory: x5[x5], Run: </span>
<span class="t" style="left:5px;top:414px;transform:scaleX(0.8796)">x006C2814</span>
<span class="t" style="left:5px;top:429px;transform:scaleX(0.8990)">7,088,148</span>
<span class="t b" style="left:84px;top:414px;transform:scaleX(1.0125)">$UpCase</span>
<span class="t" style="left:284px;top:414px;transform:scaleX(0.8681)">FILE</span>
<span class="t" style="left:323px;top:414px;transform:scaleX(0.8904)">___sh__</span>
<span class="t" style="left:374px;top:414px;transform:scaleX(0.8989)">131072</span>
<span class="t" style="left:434px;top:414px;transform:scaleX(0.9364)">11/20/2015 4:22:16 PM</span>
<span class="t" style="left:554px;top:414px;transform:scaleX(0.8904)">x000003</span>
<span class="t" style="left:614px;top:414px;transform:scaleX(0.8990)">10 30 80 80</span>
<span class="t" style="left:90px;top:429px;transform:scaleX(0.8682)">No: xA[xA] (xA), </span>
<span class="t" style="left:167px;top:429px;transform:scaleX(0.8819)">Parent directory: x5[x5], Run: </span>
<span class="t" style="left:307px;top:429px;transform:scaleX(0.9165)">11:20 03</span>
<span class="t" style="left:5px;top:446px;transform:scaleX(0.8796)">x006C2816</span>
<span class="t" style="left:5px;top:461px;transform:scaleX(0.8990)">7,088,150</span>
<span class="t b" style="left:84px;top:446px;transform:scaleX(1.0217)">$Extend</span>
<span class="t" style="left:284px;top:446px;transform:scaleX(0.9191)">DIR</span>
<span class="t" style="left:323px;top:446px;transform:scaleX(0.8904)">___sh__</span>
<span class="t" style="left:434px;top:446px;transform:scaleX(0.9364)">11/20/2015 4:22:16 PM</span>
<span class="t" style="left:614px;top:446px;transform:scaleX(0.8990)">10 30 90</span>
<span class="t" style="left:90px;top:461px;transform:scaleX(0.8682)">No: xB[xB] (xB), </span>
<span class="t" style="left:167px;top:461px;transform:scaleX(0.8819)">Parent directory: x5[x5], Run: </span>
<span class="t" style="left:5px;top:76.5px;transform:scaleX(0.8937)">Sector</span>
<span class="t" style="left:84px;top:76.5px;transform:scaleX(0.8746)">Name</span>
<span class="t" style="left:284px;top:76.5px;transform:scaleX(0.9225)">Type</span>
<span class="t" style="left:323px;top:76.5px;transform:scaleX(0.8678)">Attributes</span>
<span class="t" style="left:374px;top:76.5px;transform:scaleX(0.8568)">Size</span>
<span class="t" style="left:434px;top:76.5px;transform:scaleX(0.9070)">Date</span>
<span class="t" style="left:553px;top:76.5px;transform:scaleX(0.8777)">1st cluster</span>
<span class="t" style="left:614px;top:76.5px;transform:scaleX(0.8967)">NT Attributes</span>
<span class="t" style="left:5px;top:483px;transform:scaleX(0.8791)">(Sector:Offset)=x006C2800:x000 (7,088,128:0)</span>
<span class="t" style="left:565px;top:483px;transform:scaleX(0.8807)">Selection=x006C2800:x000-x006C2800:x000</span>
<span class="t" style="left:7px;top:503px;transform:scaleX(0.8933)">Drive:</span>
<span class="t b nv" style="left:37px;top:503px;transform:scaleX(1.0638)">HD128:</span>
<span class="t nv" style="left:84px;top:503px;transform:scaleX(0.8810)">(1st hard drive), 2,000,409,264 (x773BD2B0) sectors</span>
<span class="t nv" style="left:462px;top:503px;transform:scaleX(0.8861)">3rd GPT partition (NTFS) 975,553 MB, sectors 796,672-1,998,729,215</span>
<span class="t" style="left:7px;top:531px;transform:scaleX(0.8919)">Path:</span>
<span class="t" style="left:51px;top:538px;transform:scaleX(0.9474)">NTFS\:</span>
<span class="t" style="left:7px;top:557px;transform:scaleX(0.8764)">Volume:</span>
<span class="t" style="left:51px;top:557px;transform:scaleX(0.8793)">Cluster0: 796672, Cluster size: 8 sectors, Type: NTFS</span>
<span class="t" style="left:617px;top:557px;transform:scaleX(0.8943)">Region:</span>
<span class="t" style="left:659px;top:557px;transform:scaleX(0.8695)">Cluster x000C0000 (786432)</span>
</div>
</body></html>
